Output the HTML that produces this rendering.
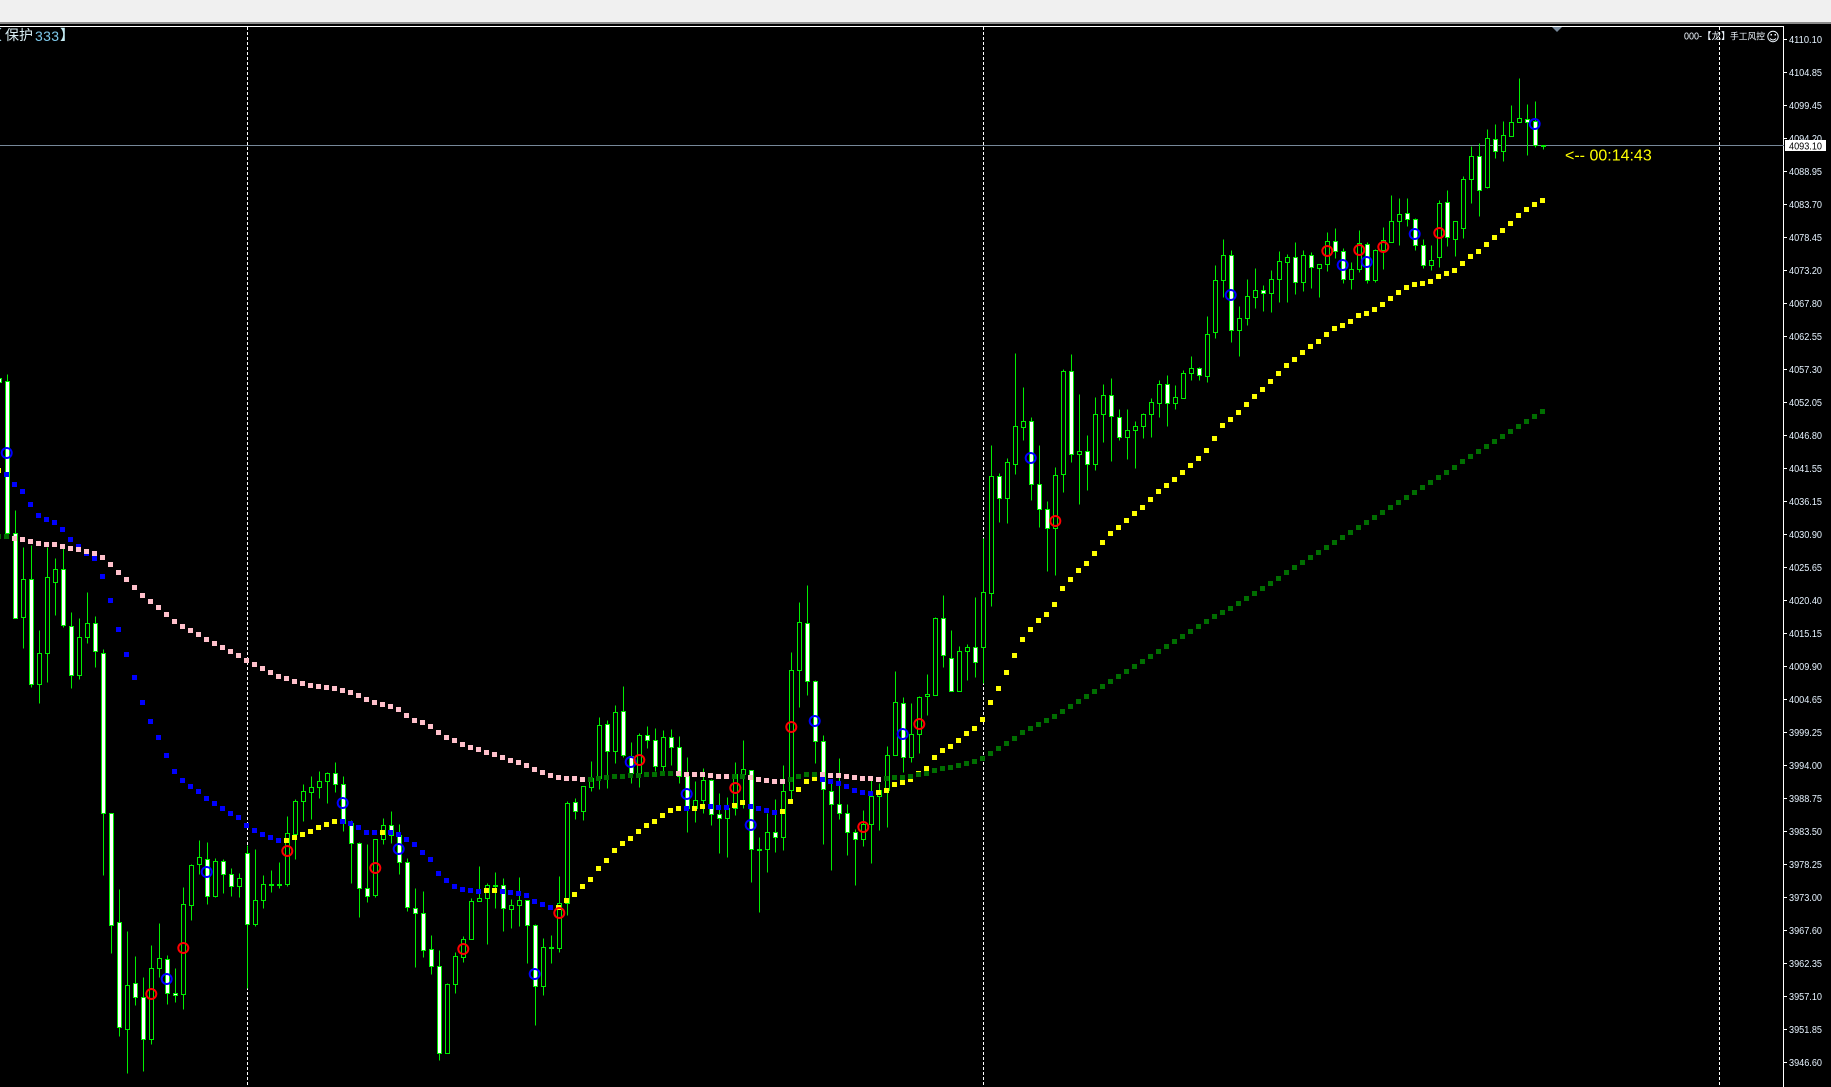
<!DOCTYPE html>
<html lang="zh">
<head>
<meta charset="utf-8">
<title>Chart</title>
<style>
html,body{margin:0;padding:0;background:#000;width:1831px;height:1087px;overflow:hidden}
svg{display:block;position:absolute;left:0;top:0}
.p{font:10px "Liberation Sans","DejaVu Sans",sans-serif;fill:#e6f3ff}
</style>
</head>
<body>
<svg width="1831" height="1087" viewBox="0 0 1831 1087" xmlns="http://www.w3.org/2000/svg">
<rect width="1831" height="1087" fill="#000"/>
<rect width="1831" height="22" fill="#f0f0f0"/>
<rect y="22" width="1831" height="2" fill="#8a8a8a"/>
<g shape-rendering="crispEdges">
<rect y="26" width="1784" height="1" fill="#fff"/>
<rect x="1783" y="26" width="1" height="1061" fill="#fff"/>
<g stroke="#fff" stroke-width="1" stroke-dasharray="3 2" fill="none">
<path d="M247.5 27V1087M983.5 27V1087M1719.5 27V1087"/>
</g>
<rect y="145" width="1784" height="1" fill="#778899"/>
<path d="M1552 27h10l-5 5z" fill="#778899" shape-rendering="auto"/>

<g transform="translate(.5 .5)" stroke="#00ee00" stroke-width="1">
<path fill="none" d="M7 374V533M15 510V618M23 547V648M31 545V687M39 630V703M47 547V682M55 558V615M63 548V627M71 612V688M79 618V679M87 592V643M95 616V667M103 649V875M111 813V953M119 889V1036M127 931V1073M135 956V1005M143 977V1071M151 945V1044M159 923V977M167 955V1004M175 968V1002M183 887V1009M191 864V920M199 840V874M207 842V904M215 858V897M223 859V893M231 868V896M239 873V897M247 845V988M255 849V926M263 875V908M271 870V892M279 862V888M287 816V886M295 799V859M303 784V821M311 776V819M319 771V798M327 772V803M335 762V792M343 776V831M351 820V883M359 842V917M367 844V902M375 839V897M383 818V844M391 811V843M399 824V874M407 858V911M415 888V967M423 891V957M431 935V974M439 950V1060M447 983V1053M455 952V993M463 936V962M471 898V939M479 866V901M487 883V944M495 872V908M503 878V931M511 899V928M519 877V926M527 900V963M535 924V1025M543 938V995M551 935V963M559 876V952M567 801V915M575 798V819M583 786V820M591 761V791M599 717V789M607 720V788M615 705V763M623 686V757M631 742V783M639 733V787M647 726V748M655 728V771M663 730V772M671 729V765M679 736V783M687 757V832M695 781V822M703 768V813M711 779V825M719 793V853M727 797V857M735 762V815M743 740V808M751 770V882M759 837V912M767 813V872M775 799V852M783 765V850M791 652V802M799 602V707M807 585V695M815 680V763M823 735V844M831 780V870M839 758V819M847 804V855M855 829V885M863 810V846M871 780V863M879 783V830M887 746V827M895 671V755M903 697V772M911 703V762M919 696V753M927 674V715M935 617V695M943 595V667M951 630V691M959 646V691M967 644V680M975 597V677M983 538V683M991 445V606M999 473V522M1007 458V523M1015 353V474M1023 387V440M1031 417V500M1039 445V527M1047 501V571M1055 467V575M1063 369V492M1071 354V462M1079 394V504M1087 435V490M1095 397V470M1103 384V442M1111 378V461M1119 409V440M1127 409V459M1135 421V468M1143 413V438M1151 398V437M1159 380V417M1167 375V426M1175 385V409M1183 370V398M1191 356V380M1199 367V380M1207 316V382M1215 265V338M1223 239V297M1231 250V342M1239 306V356M1247 279V325M1255 268V308M1263 285V311M1271 270V312M1279 251V302M1287 254V302M1295 242V294M1303 250V291M1311 252V288M1319 264V297M1327 232V271M1335 228V258M1343 248V283M1351 262V289M1359 230V272M1367 242V283M1375 249V282M1383 227V269M1391 195V242M1399 198V245M1407 198V226M1415 218V250M1423 239V268M1431 245V270M1439 200V267M1447 190V246M1455 221V256M1463 176V238M1471 146V203M1479 143V216M1487 129V188M1495 124V158M1503 121V161M1511 105V136M1519 78V122M1527 104V155M1535 101V147M1543 145V149"/>
<path fill="#000" d="M21 579h4V617h-4zM37 653h4V684h-4zM45 577h4V653h-4zM53 569h4V582h-4zM77 637h4V675h-4zM85 623h4V637h-4zM125 985h4V1029h-4zM149 968h4V1039h-4zM157 958h4V968h-4zM181 904h4V994h-4zM189 865h4V905h-4zM197 857h4V864h-4zM213 861h4V896h-4zM237 878h4V886h-4zM253 900h4V924h-4zM261 884h4V900h-4zM285 833h4V884h-4zM293 801h4V834h-4zM301 791h4V801h-4zM309 787h4V792h-4zM317 781h4V787h-4zM325 773h4V781h-4zM373 839h4V895h-4zM381 825h4V839h-4zM445 984h4V1053h-4zM453 956h4V984h-4zM461 939h4V957h-4zM469 901h4V939h-4zM477 898h4V901h-4zM485 885h4V898h-4zM509 905h4V909h-4zM517 900h4V905h-4zM541 947h4V986h-4zM557 903h4V948h-4zM565 803h4V903h-4zM581 786h4V811h-4zM589 778h4V787h-4zM597 725h4V778h-4zM613 712h4V751h-4zM637 735h4V773h-4zM661 737h4V766h-4zM693 800h4V808h-4zM701 780h4V800h-4zM725 808h4V818h-4zM733 774h4V808h-4zM741 769h4V774h-4zM765 832h4V849h-4zM781 791h4V837h-4zM789 670h4V790h-4zM797 622h4V670h-4zM861 824h4V839h-4zM869 796h4V824h-4zM877 790h4V796h-4zM885 755h4V790h-4zM893 702h4V755h-4zM909 734h4V757h-4zM917 697h4V734h-4zM925 694h4V696h-4zM933 618h4V695h-4zM957 651h4V691h-4zM965 647h4V651h-4zM981 592h4V647h-4zM989 476h4V593h-4zM1005 462h4V498h-4zM1013 426h4V464h-4zM1021 421h4V427h-4zM1053 475h4V528h-4zM1061 371h4V474h-4zM1077 451h4V454h-4zM1093 414h4V464h-4zM1101 395h4V414h-4zM1125 430h4V437h-4zM1133 426h4V430h-4zM1141 414h4V426h-4zM1149 402h4V414h-4zM1157 384h4V403h-4zM1173 397h4V403h-4zM1181 373h4V398h-4zM1189 368h4V373h-4zM1205 334h4V376h-4zM1213 280h4V332h-4zM1221 255h4V280h-4zM1237 318h4V330h-4zM1245 296h4V318h-4zM1253 290h4V297h-4zM1269 279h4V293h-4zM1277 261h4V279h-4zM1285 257h4V262h-4zM1301 255h4V282h-4zM1317 264h4V268h-4zM1325 241h4V264h-4zM1349 269h4V279h-4zM1357 243h4V269h-4zM1373 250h4V280h-4zM1381 240h4V250h-4zM1389 221h4V242h-4zM1397 214h4V221h-4zM1429 260h4V265h-4zM1437 203h4V257h-4zM1453 221h4V239h-4zM1461 179h4V228h-4zM1469 156h4V179h-4zM1485 138h4V187h-4zM1501 135h4V151h-4zM1509 122h4V136h-4zM1517 118h4V122h-4zM269 884h4v1h-4zM277 884h4v1h-4zM493 885h4v1h-4zM549 947h4v1h-4zM757 849h4v1h-4zM1541 145h4v1h-4z"/>
<path fill="#fff" d="M-3 378h4V382h-4zM5 381h4V533h-4zM13 533h4V618h-4zM29 579h4V684h-4zM61 569h4V625h-4zM69 626h4V675h-4zM93 623h4V651h-4zM101 653h4V813h-4zM109 813h4V925h-4zM117 922h4V1027h-4zM133 983h4V997h-4zM141 997h4V1039h-4zM165 959h4V993h-4zM173 993h4V995h-4zM205 859h4V896h-4zM221 861h4V874h-4zM229 874h4V886h-4zM245 853h4V924h-4zM333 773h4V784h-4zM341 784h4V823h-4zM349 823h4V843h-4zM357 843h4V888h-4zM365 888h4V896h-4zM389 825h4V835h-4zM397 835h4V862h-4zM405 862h4V907h-4zM413 908h4V913h-4zM421 913h4V950h-4zM429 949h4V966h-4zM437 966h4V1053h-4zM501 885h4V908h-4zM525 900h4V925h-4zM533 925h4V986h-4zM573 802h4V811h-4zM605 724h4V751h-4zM621 711h4V755h-4zM629 756h4V773h-4zM645 735h4V740h-4zM653 740h4V766h-4zM669 737h4V747h-4zM677 747h4V776h-4zM685 776h4V808h-4zM709 780h4V814h-4zM717 814h4V818h-4zM749 770h4V849h-4zM773 832h4V837h-4zM805 623h4V681h-4zM813 681h4V741h-4zM821 741h4V789h-4zM829 791h4V804h-4zM837 804h4V813h-4zM845 813h4V832h-4zM853 832h4V839h-4zM901 703h4V757h-4zM941 618h4V655h-4zM949 658h4V691h-4zM973 647h4V662h-4zM997 476h4V498h-4zM1029 421h4V484h-4zM1037 484h4V509h-4zM1045 509h4V528h-4zM1069 371h4V454h-4zM1085 451h4V464h-4zM1109 395h4V416h-4zM1117 417h4V437h-4zM1165 384h4V403h-4zM1197 368h4V375h-4zM1229 255h4V330h-4zM1261 290h4V293h-4zM1293 257h4V282h-4zM1309 255h4V267h-4zM1333 241h4V251h-4zM1341 251h4V279h-4zM1365 244h4V280h-4zM1405 213h4V219h-4zM1413 219h4V245h-4zM1421 245h4V265h-4zM1445 202h4V237h-4zM1477 156h4V190h-4zM1493 139h4V151h-4zM1525 119h4V122h-4zM1533 121h4V145h-4z"/>
</g>

<g transform="translate(0 .5)" stroke-width="5" fill="none">
<path stroke="#0000ff" d="M4 474h5M12 484h5M20 491h5M28 504h5M36 515h5M44 519h5M52 522h5M60 529h5M68 539h5M76 546h5M84 553h5M92 558h5M100 576h5M108 600h5M116 629h5M124 654h5M132 677h5M140 702h5M148 721h5M156 737h5M164 755h5M172 771h5M180 780h5M188 786h5M196 791h5M204 798h5M212 803h5M220 808h5M228 813h5M236 817h5M244 825h5M252 830h5M260 834h5M268 837h5M276 840h5M340 821h5M348 823h5M356 827h5M364 832h5M372 832h5M388 832h5M396 834h5M404 839h5M412 844h5M420 852h5M428 859h5M436 873h5M444 880h5M452 886h5M460 889h5M468 890h5M476 891h5M500 891h5M508 892h5M516 893h5M524 895h5M532 901h5M540 904h5M548 907h5M684 808h5M708 806h5M716 807h5M724 807h5M748 806h5M756 808h5M764 810h5M772 812h5M820 779h5M828 781h5M836 783h5M844 786h5M852 790h5M860 792h5M868 793h5"/>
<path stroke="#ffff00" d="M-4 470h5M284 840h5M292 837h5M300 834h5M308 831h5M316 827h5M324 824h5M332 821h5M380 832h5M484 890h5M492 890h5M556 907h5M564 900h5M572 894h5M580 886h5M588 879h5M596 868h5M604 860h5M612 850h5M620 843h5M628 838h5M636 831h5M644 825h5M652 821h5M660 815h5M668 810h5M676 808h5M692 808h5M700 806h5M732 805h5M740 802h5M780 811h5M788 801h5M796 789h5M804 781h5M812 778h5M876 792h5M884 790h5M892 784h5M900 782h5M908 779h5M916 773h5M924 768h5M932 757h5M940 750h5M948 746h5M956 740h5M964 733h5M972 728h5M980 719h5M988 702h5M996 688h5M1004 672h5M1012 655h5M1020 639h5M1028 629h5M1036 620h5M1044 614h5M1052 604h5M1060 588h5M1068 579h5M1076 570h5M1084 563h5M1092 553h5M1100 542h5M1108 533h5M1116 527h5M1124 520h5M1132 513h5M1140 507h5M1148 499h5M1156 491h5M1164 485h5M1172 479h5M1180 472h5M1188 465h5M1196 458h5M1204 450h5M1212 438h5M1220 425h5M1228 419h5M1236 412h5M1244 404h5M1252 396h5M1260 389h5M1268 381h5M1276 373h5M1284 365h5M1292 359h5M1300 352h5M1308 346h5M1316 341h5M1324 334h5M1332 328h5M1340 325h5M1348 321h5M1356 315h5M1364 313h5M1372 309h5M1380 304h5M1388 298h5M1396 292h5M1404 287h5M1412 284h5M1420 283h5M1428 281h5M1436 276h5M1444 273h5M1452 270h5M1460 263h5M1468 256h5M1476 251h5M1484 244h5M1492 237h5M1500 230h5M1508 223h5M1516 215h5M1524 209h5M1532 204h5M1540 200h5"/>
<path stroke="#006e00" d="M-4 536h5M4 536h5M588 779h5M596 778h5M604 777h5M612 776h5M620 776h5M628 775h5M636 775h5M644 774h5M652 774h5M660 773h5M668 773h5M732 776h5M740 776h5M788 779h5M796 776h5M804 774h5M812 774h5M884 778h5M892 777h5M900 777h5M908 776h5M916 774h5M924 773h5M932 770h5M940 768h5M948 767h5M956 765h5M964 763h5M972 761h5M980 758h5M988 753h5M996 748h5M1004 743h5M1012 738h5M1020 732h5M1028 728h5M1036 724h5M1044 720h5M1052 716h5M1060 711h5M1068 706h5M1076 701h5M1084 696h5M1092 691h5M1100 686h5M1108 681h5M1116 676h5M1124 671h5M1132 666h5M1140 661h5M1148 656h5M1156 651h5M1164 646h5M1172 641h5M1180 636h5M1188 631h5M1196 626h5M1204 621h5M1212 616h5M1220 612h5M1228 608h5M1236 603h5M1244 598h5M1252 593h5M1260 588h5M1268 583h5M1276 578h5M1284 572h5M1292 567h5M1300 562h5M1308 557h5M1316 552h5M1324 547h5M1332 542h5M1340 537h5M1348 532h5M1356 527h5M1364 522h5M1372 517h5M1380 512h5M1388 507h5M1396 502h5M1404 497h5M1412 492h5M1420 487h5M1428 482h5M1436 477h5M1444 472h5M1452 467h5M1460 461h5M1468 456h5M1476 451h5M1484 446h5M1492 441h5M1500 436h5M1508 431h5M1516 426h5M1524 421h5M1532 416h5M1540 411h5"/>
<path stroke="#ffc0cb" d="M12 538h5M20 539h5M28 541h5M36 543h5M44 544h5M52 544h5M60 546h5M68 548h5M76 549h5M84 551h5M92 553h5M100 557h5M108 564h5M116 572h5M124 579h5M132 587h5M140 595h5M148 601h5M156 607h5M164 614h5M172 621h5M180 626h5M188 630h5M196 634h5M204 639h5M212 643h5M220 647h5M228 651h5M236 655h5M244 660h5M252 664h5M260 668h5M268 672h5M276 676h5M284 678h5M292 681h5M300 683h5M308 685h5M316 686h5M324 687h5M332 688h5M340 690h5M348 692h5M356 695h5M364 699h5M372 702h5M380 704h5M388 706h5M396 709h5M404 715h5M412 720h5M420 722h5M428 726h5M436 732h5M444 737h5M452 740h5M460 744h5M468 747h5M476 749h5M484 752h5M492 754h5M500 757h5M508 760h5M516 762h5M524 765h5M532 769h5M540 772h5M548 775h5M556 777h5M564 778h5M572 778h5M580 779h5M676 773h5M684 774h5M692 774h5M700 774h5M708 775h5M716 776h5M724 776h5M748 777h5M756 779h5M764 780h5M772 781h5M780 781h5M820 774h5M828 775h5M836 775h5M844 776h5M852 777h5M860 778h5M868 778h5M876 779h5"/>
</g>
</g>

<g fill="none" stroke-width="2">
<g stroke="#0000ff">
<circle cx="6.7" cy="453" r="5"/><circle cx="206.7" cy="872" r="5"/><circle cx="166.7" cy="979" r="5"/><circle cx="342.7" cy="803" r="5"/><circle cx="398.7" cy="849" r="5"/><circle cx="534.7" cy="974" r="5"/><circle cx="630.7" cy="762" r="5"/><circle cx="686.7" cy="794" r="5"/><circle cx="750.7" cy="825" r="5"/><circle cx="814.7" cy="721" r="5"/><circle cx="902.7" cy="734" r="5"/><circle cx="1030.7" cy="458" r="5"/><circle cx="1230.7" cy="295" r="5"/><circle cx="1342.7" cy="265" r="5"/><circle cx="1366.7" cy="262" r="5"/><circle cx="1414.7" cy="234" r="5"/><circle cx="1534.7" cy="124" r="5"/>
</g>
<g stroke="#ff0000">
<circle cx="151.3" cy="994" r="5"/><circle cx="183.3" cy="948" r="5"/><circle cx="287.3" cy="851" r="5"/><circle cx="375.3" cy="868" r="5"/><circle cx="463.3" cy="949" r="5"/><circle cx="559.3" cy="913" r="5"/><circle cx="639.3" cy="760" r="5"/><circle cx="735.3" cy="788" r="5"/><circle cx="791.3" cy="727" r="5"/><circle cx="863.3" cy="827" r="5"/><circle cx="919.3" cy="724" r="5"/><circle cx="1055.3" cy="521" r="5"/><circle cx="1327.3" cy="251" r="5"/><circle cx="1359.3" cy="250" r="5"/><circle cx="1383.3" cy="247" r="5"/><circle cx="1439.3" cy="233" r="5"/>
</g>
</g>

<path shape-rendering="crispEdges" fill="none" stroke="#fff" d="M1784 39.5h3M1784 72.5h3M1784 105.5h3M1784 138.5h3M1784 171.5h3M1784 204.5h3M1784 237.5h3M1784 270.5h3M1784 303.5h3M1784 336.5h3M1784 369.5h3M1784 402.5h3M1784 435.5h3M1784 468.5h3M1784 501.5h3M1784 534.5h3M1784 567.5h3M1784 600.5h3M1784 633.5h3M1784 666.5h3M1784 699.5h3M1784 732.5h3M1784 765.5h3M1784 798.5h3M1784 831.5h3M1784 864.5h3M1784 897.5h3M1784 930.5h3M1784 963.5h3M1784 996.5h3M1784 1029.5h3M1784 1062.5h3"/>

<g class="p">
<text class="p" x="1789" y="43" textLength="33" lengthAdjust="spacingAndGlyphs">4110.10</text>
<text class="p" x="1789" y="76" textLength="33" lengthAdjust="spacingAndGlyphs">4104.85</text>
<text class="p" x="1789" y="109" textLength="33" lengthAdjust="spacingAndGlyphs">4099.45</text>
<text class="p" x="1789" y="142" textLength="33" lengthAdjust="spacingAndGlyphs">4094.20</text>
<text class="p" x="1789" y="175" textLength="33" lengthAdjust="spacingAndGlyphs">4088.95</text>
<text class="p" x="1789" y="208" textLength="33" lengthAdjust="spacingAndGlyphs">4083.70</text>
<text class="p" x="1789" y="241" textLength="33" lengthAdjust="spacingAndGlyphs">4078.45</text>
<text class="p" x="1789" y="274" textLength="33" lengthAdjust="spacingAndGlyphs">4073.20</text>
<text class="p" x="1789" y="307" textLength="33" lengthAdjust="spacingAndGlyphs">4067.80</text>
<text class="p" x="1789" y="340" textLength="33" lengthAdjust="spacingAndGlyphs">4062.55</text>
<text class="p" x="1789" y="373" textLength="33" lengthAdjust="spacingAndGlyphs">4057.30</text>
<text class="p" x="1789" y="406" textLength="33" lengthAdjust="spacingAndGlyphs">4052.05</text>
<text class="p" x="1789" y="439" textLength="33" lengthAdjust="spacingAndGlyphs">4046.80</text>
<text class="p" x="1789" y="472" textLength="33" lengthAdjust="spacingAndGlyphs">4041.55</text>
<text class="p" x="1789" y="505" textLength="33" lengthAdjust="spacingAndGlyphs">4036.15</text>
<text class="p" x="1789" y="538" textLength="33" lengthAdjust="spacingAndGlyphs">4030.90</text>
<text class="p" x="1789" y="571" textLength="33" lengthAdjust="spacingAndGlyphs">4025.65</text>
<text class="p" x="1789" y="604" textLength="33" lengthAdjust="spacingAndGlyphs">4020.40</text>
<text class="p" x="1789" y="637" textLength="33" lengthAdjust="spacingAndGlyphs">4015.15</text>
<text class="p" x="1789" y="670" textLength="33" lengthAdjust="spacingAndGlyphs">4009.90</text>
<text class="p" x="1789" y="703" textLength="33" lengthAdjust="spacingAndGlyphs">4004.65</text>
<text class="p" x="1789" y="736" textLength="33" lengthAdjust="spacingAndGlyphs">3999.25</text>
<text class="p" x="1789" y="769" textLength="33" lengthAdjust="spacingAndGlyphs">3994.00</text>
<text class="p" x="1789" y="802" textLength="33" lengthAdjust="spacingAndGlyphs">3988.75</text>
<text class="p" x="1789" y="835" textLength="33" lengthAdjust="spacingAndGlyphs">3983.50</text>
<text class="p" x="1789" y="868" textLength="33" lengthAdjust="spacingAndGlyphs">3978.25</text>
<text class="p" x="1789" y="901" textLength="33" lengthAdjust="spacingAndGlyphs">3973.00</text>
<text class="p" x="1789" y="934" textLength="33" lengthAdjust="spacingAndGlyphs">3967.60</text>
<text class="p" x="1789" y="967" textLength="33" lengthAdjust="spacingAndGlyphs">3962.35</text>
<text class="p" x="1789" y="1000" textLength="33" lengthAdjust="spacingAndGlyphs">3957.10</text>
<text class="p" x="1789" y="1033" textLength="33" lengthAdjust="spacingAndGlyphs">3951.85</text>
<text class="p" x="1789" y="1066" textLength="33" lengthAdjust="spacingAndGlyphs">3946.60</text>
</g>
<rect x="1785" y="140" width="41" height="11" fill="#fff"/>
<text x="1789" y="149.5" font-family="'Liberation Sans',sans-serif" font-size="10" fill="#000" textLength="33" lengthAdjust="spacingAndGlyphs">4093.10</text>

<text x="1565" y="160.5" font-family="'Liberation Sans',sans-serif" font-size="16" fill="#ffff00" xml:space="preserve">&lt;-- 00:14:43</text>

<g font-family="'Liberation Sans','Noto Sans CJK SC',sans-serif" font-size="14">
<text x="-12" y="40" fill="#add8e6">【</text>
<text x="5" y="40" fill="#d8ecf2">保护</text>
<text x="35" y="41" fill="#7ec8ea" textLength="24" lengthAdjust="spacing">333</text>
<text x="60" y="40" fill="#c4eaf2" font-weight="700">】</text>
</g>

<g font-family="'Liberation Sans','Noto Sans CJK SC',sans-serif" fill="#f0f8ff">
<text x="1684" y="39.5" font-size="10" textLength="18" lengthAdjust="spacingAndGlyphs">000-</text>
<text x="1702" y="39.5" font-size="9.5">【龙】</text>
<text x="1730" y="39.5" font-size="9" textLength="35" lengthAdjust="spacingAndGlyphs">手工风控</text>
</g>
<g fill="none" stroke="#f0f8ff" stroke-width="1">
<circle cx="1773" cy="36.5" r="5.2"/>
<path d="M1770 38.5q3 3 6 0"/>
</g>
<rect x="1770.5" y="34" width="1.5" height="1.5" fill="#f0f8ff"/>
<rect x="1774.5" y="34" width="1.5" height="1.5" fill="#f0f8ff"/>
</svg>
</body>
</html>
